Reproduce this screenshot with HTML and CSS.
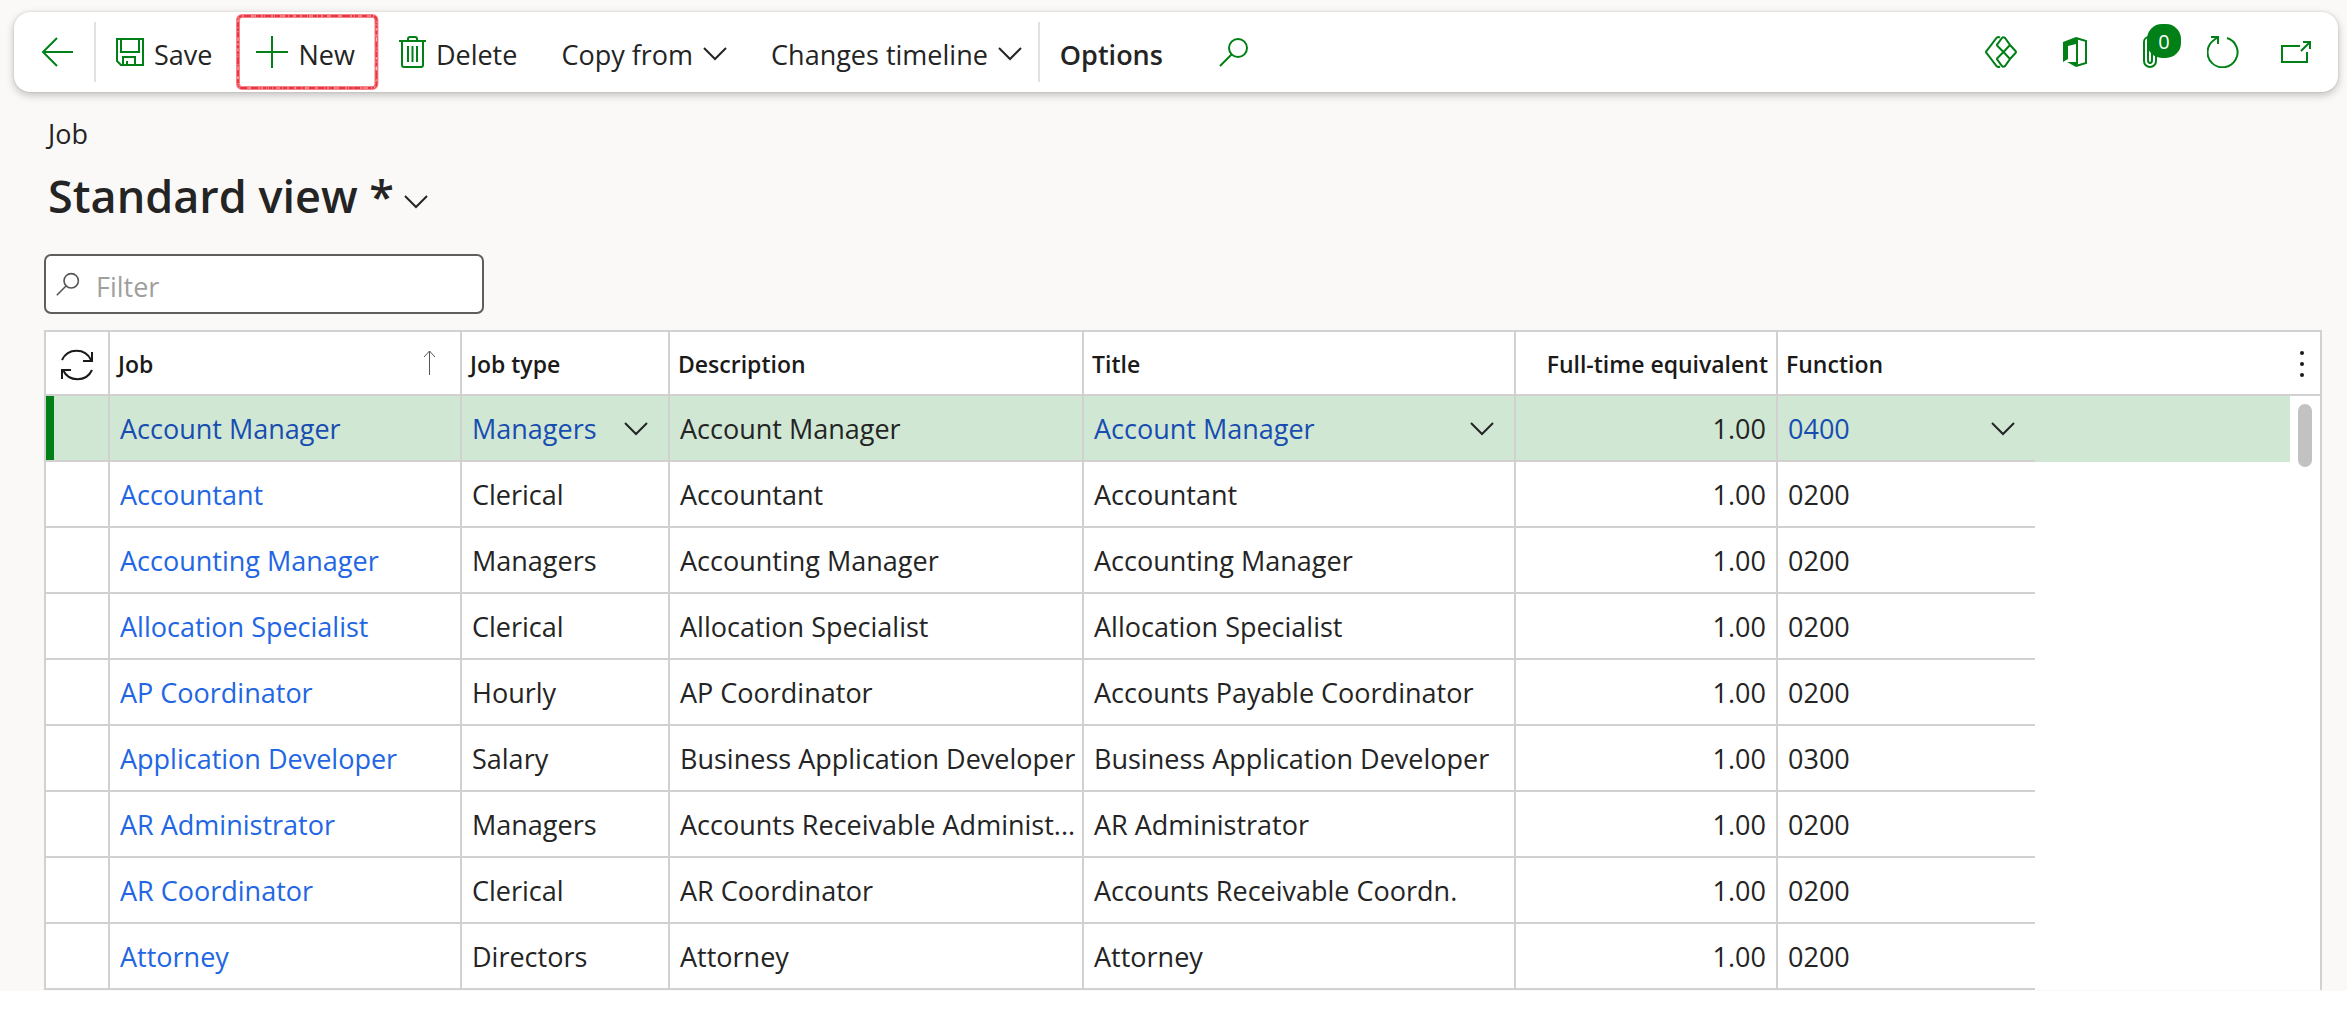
FILE: index.html
```html
<!DOCTYPE html>
<html lang="en">
<head>
<meta charset="utf-8">
<title>Job - Standard view</title>
<link rel="stylesheet" href="styles.css">
</head>
<body>
<svg width="0" height="0" class="defs" aria-hidden="true">
  <symbol id="chevron" viewBox="0 0 24 14"><path d="M1 1l11 11L23 1" fill="none" stroke="currentColor" stroke-width="2"/></symbol>
  <symbol id="search" viewBox="0 0 30 30"><circle cx="19" cy="11" r="9" fill="none" stroke="currentColor" stroke-width="2"/><path d="M12.500 17.500L1 29" fill="none" stroke="currentColor" stroke-width="2"/></symbol>
</svg>
<div class="app">
  <header class="toolbar">
    <button class="tool back" aria-label="Back"><svg width="32" height="30" viewBox="0 0 32 30"><path d="M32 15H2M16 1L2 15l14 14" /></svg></button>
    <span class="divider"></span>
    <button class="tool"><svg width="28" height="28" viewBox="0 0 28 28"><path d="M1 1h26v26H5l-4-4zM5 1v13h18V1M7 27v-8h12v8M11 27v-4"/></svg><span>Save</span></button>
    <button class="tool marked"><svg width="32" height="32" viewBox="0 0 32 32"><path d="M16 0v32M0 16h32"/></svg><span>New</span><svg class="frame" aria-hidden="true"><rect class="crayon"/><rect class="crayon grain"/><rect class="crayon gaps"/></svg></button>
    <button class="tool"><svg width="27" height="32" viewBox="0 0 27 32"><path d="M0 5h27M9 5V3q0-2 2-2h5q2 0 2 2v2M3 5v24q0 2 2 2h17q2 0 2-2V5M9 10v16M13.500 10v16M18 10v16"/></svg><span>Delete</span></button>
    <button class="tool"><span>Copy from</span><svg class="chev" width="24" height="14"><use href="#chevron"/></svg></button>
    <button class="tool last"><span>Changes timeline</span><svg class="chev" width="24" height="14"><use href="#chevron"/></svg></button>
    <span class="divider"></span>
    <button class="tool options">Options</button>
    <button class="tool find" aria-label="Search"><svg width="30" height="30"><use href="#search"/></svg></button>
    <div class="utilities">
      <button class="icon" aria-label="Power Apps"><svg width="32" height="32" viewBox="0 0 32 32"><path d="M15 1.500q-2-1-3.500.5L1.500 15q-1 1 0 2l10 13q1.500 1.500 3.500.5M17 2q1.500-1.500 3 0l5 7-6.500 7L12.500 10q-1-1 0-2zM25 9l5.500 6q1 1 0 2L25 23l-6.500-7zM18.500 16L25 23l-5 7q-1.500 1.500-3 0l-4.500-6q-1-1 0-2z"/></svg></button>
      <button class="icon" aria-label="Office"><svg width="24" height="30" viewBox="0 0 24 30"><path d="M13 1l10 3v22l-10 3M14 1v28"/><path class="solid" d="M0 5L13 0v7L5 9v13l-5 3zM4 25h9v5z"/></svg></button>
      <button class="icon" aria-label="Attachments"><svg width="14" height="32" viewBox="0 0 14 32"><path d="M1 8v17a6 6 0 0 0 12 0V6a4 4 0 0 0-8 0v18a2 3 0 0 0 4 0V8M1 9V6a5 5 0 0 1 5-5"/></svg><span class="badge">0</span></button>
      <button class="icon" aria-label="Refresh"><svg width="32" height="32" viewBox="0 0 32 32"><path d="M20 2A15 15 0 1 1 7 4l4-3M4 1h7v7"/></svg></button>
      <button class="icon" aria-label="Open in new window"><svg width="30" height="22" viewBox="0 0 30 22"><path d="M19 5H1v16h25V11M20 10l9-9M22 1h7v7"/></svg></button>
    </div>
  </header>
  <main class="page">
    <p class="crumb">Job</p>
    <h1><button class="view">Standard view *<svg width="24" height="14"><use href="#chevron"/></svg></button></h1>
    <label class="filter"><svg width="24" height="24" viewBox="0 0 30 30"><use href="#search"/></svg><input type="text" placeholder="Filter" aria-label="Filter"></label>
    <div class="grid">
      <table>
        <colgroup><col class="c-mark"><col class="c-job"><col class="c-type"><col class="c-desc"><col class="c-title"><col class="c-fte"><col class="c-func"><col><col class="c-gutter"></colgroup>
        <thead><tr>
          <th><button class="sync" aria-label="Refresh rows"><svg width="34" height="34" viewBox="0 0 34 34"><path d="M2 12A16 16 0 0 1 31 12M32 4v9h-9M32 22A16 16 0 0 1 3 22M2 31v-9h9"/></svg></button></th>
          <th><div class="head"><span>Job</span><svg width="13" height="25" viewBox="0 0 13 25"><path d="M6.500 25V1M1 7l5.500-6L12 7"/></svg></div></th>
          <th>Job type</th><th>Description</th><th>Title</th><th class="num">Full-time equivalent</th>
          <th class="open">Function</th><th class="open"></th>
          <th class="open more"><button aria-label="More options"><svg width="6" height="28" viewBox="0 0 6 28"><circle cx="3" cy="3" r="2"/><circle cx="3" cy="14" r="2"/><circle cx="3" cy="25" r="2"/></svg></button></th>
        </tr></thead>
        <tbody>
          <tr class="selected"><td></td><td><a href="#">Account Manager</a></td><td><div class="pick"><a href="#">Managers</a><svg width="24" height="14"><use href="#chevron"/></svg></div></td><td>Account Manager</td><td><div class="pick"><a href="#">Account Manager</a><svg width="24" height="14"><use href="#chevron"/></svg></div></td><td class="num">1.00</td><td class="open"><div class="pick"><a href="#">0400</a><svg width="24" height="14"><use href="#chevron"/></svg></div></td><td class="rest"></td><td class="gutter"><div class="thumb"></div></td></tr>
          <tr><td></td><td><a href="#">Accountant</a></td><td>Clerical</td><td>Accountant</td><td>Accountant</td><td class="num">1.00</td><td class="open">0200</td></tr>
          <tr><td></td><td><a href="#">Accounting Manager</a></td><td>Managers</td><td>Accounting Manager</td><td>Accounting Manager</td><td class="num">1.00</td><td class="open">0200</td></tr>
          <tr><td></td><td><a href="#">Allocation Specialist</a></td><td>Clerical</td><td>Allocation Specialist</td><td>Allocation Specialist</td><td class="num">1.00</td><td class="open">0200</td></tr>
          <tr><td></td><td><a href="#">AP Coordinator</a></td><td>Hourly</td><td>AP Coordinator</td><td>Accounts Payable Coordinator</td><td class="num">1.00</td><td class="open">0200</td></tr>
          <tr><td></td><td><a href="#">Application Developer</a></td><td>Salary</td><td>Business Application Developer</td><td>Business Application Developer</td><td class="num">1.00</td><td class="open">0300</td></tr>
          <tr><td></td><td><a href="#">AR Administrator</a></td><td>Managers</td><td>Accounts Receivable Administ...</td><td>AR Administrator</td><td class="num">1.00</td><td class="open">0200</td></tr>
          <tr><td></td><td><a href="#">AR Coordinator</a></td><td>Clerical</td><td>AR Coordinator</td><td>Accounts Receivable Coordn.</td><td class="num">1.00</td><td class="open">0200</td></tr>
          <tr><td></td><td><a href="#">Attorney</a></td><td>Directors</td><td>Attorney</td><td>Attorney</td><td class="num">1.00</td><td class="open">0200</td></tr>
        </tbody>
      </table>
    </div>
  </main>
</div>
</body>
</html>
```
FILE: styles.css
```css
* { box-sizing: border-box; }
body {
  margin: 0;
  background: #fff;
  color: #242424;
  font: 27px/36px "Segoe UI", "Open Sans", "Noto Sans", sans-serif;
}
.defs { position: absolute; }
.app { background: #faf9f7; padding-top: 12px; }
button {
  font: inherit;
  color: inherit;
  background: none;
  border: 0;
  padding: 0;
  margin: 0;
}
svg { flex: none; fill: none; stroke: currentColor; stroke-width: 2; }

.toolbar {
  display: flex;
  align-items: center;
  height: 80px;
  margin: 0 9px 0 14px;
  background: #fff;
  border-radius: 16px;
  box-shadow: 0 3px 8px rgba(0, 0, 0, .24), 0 0 2px rgba(0, 0, 0, .16);
}
.tool {
  position: relative;
  display: flex;
  align-items: center;
  gap: 10px;
  height: 76px;
  padding: 0 24px 0 20px;
  white-space: nowrap;
}
.tool > svg { color: #008016; }
.tool > span { padding-top: 5px; }
.tool > .chev { color: #242424; margin: 4px 0 0; }
.back { padding: 0 21px 0 27px; }
.last { padding-right: 16px; }
.divider { width: 2px; height: 60px; background: #e1e1e1; }
.options { font-weight: 600; padding-top: 5px; }
.find { margin-left: 12px; }
.tool > .frame { position: absolute; inset: 0; width: 100%; height: 100%; }
.crayon {
  x: 2px;
  y: 2px;
  width: calc(100% - 4px);
  height: calc(100% - 4px);
  rx: 4px;
  stroke: #f5858b;
  stroke-width: 4;
}
.grain { stroke: #ec3540; stroke-width: 2; stroke-dasharray: 9 1 3 1 5 2 11 1; }
.gaps { stroke: #fbc4c8; stroke-width: 1; stroke-dasharray: 2 7 4 9 1 6; }

.utilities { display: flex; align-items: center; margin: 0 27px 0 auto; }
.icon { position: relative; display: flex; color: #008016; margin-left: 46px; }
.icon:nth-child(3) { margin-left: 56px; }
.icon:nth-child(4) { margin-left: 50px; }
.icon:nth-child(5) { margin-left: 42px; }
.utilities .solid { fill: currentColor; stroke: none; }
.badge {
  position: absolute;
  left: 4px;
  top: -12px;
  width: 34px;
  height: 34px;
  border-radius: 15px;
  background: #008016;
  color: #fff;
  font-size: 20px;
  line-height: 35px;
}

.page { padding: 24px 25px 1px 44px; }
.crumb { margin: 0; padding-left: 4px; }
h1 { margin: 12px 0 26px; font-size: 45px; line-height: 64px; font-weight: 600; }
.view { display: flex; align-items: center; gap: 10px; padding-left: 4px; }
.view svg { margin-top: 12px; }
.filter {
  display: flex;
  align-items: center;
  gap: 16px;
  width: 440px;
  height: 60px;
  padding: 0 10px;
  background: #fff;
  border: 2px solid #605e5c;
  border-radius: 7px;
}
.filter svg { color: #555; }
.filter input {
  flex: 1;
  min-width: 0;
  padding: 6px 0 0;
  font: inherit;
  border: 0;
  outline: 0;
  background: none;
}
.filter input::placeholder { color: #a19f9d; opacity: 1; }

.grid { margin-top: 16px; background: #fff; border: 2px solid #d1d1d1; border-bottom: 0; }
table { width: 100%; table-layout: fixed; border-collapse: separate; border-spacing: 0; }
.c-mark { width: 64px; }
.c-job { width: 352px; }
.c-type { width: 208px; }
.c-desc { width: 414px; }
.c-title { width: 432px; }
.c-fte { width: 262px; }
.c-func { width: 257px; }
.c-gutter { width: 30px; }
th, td {
  height: 66px;
  padding: 2px 10px 0;
  text-align: left;
  white-space: nowrap;
  border-right: 2px solid #d1d1d1;
  border-bottom: 2px solid #d1d1d1;
}
th { height: 64px; padding: 2px 8px 0; font-size: 23px; font-weight: 600; color: #1b1a19; }
.open { border-right: 0; }
.num { text-align: right; }
th:first-child { padding: 4px 0 0; }
.sync { display: block; width: 34px; height: 34px; margin: 0 auto; }
.head { display: flex; align-items: center; justify-content: space-between; padding-right: 16px; }
.head svg { color: #555; stroke-width: 1; margin-bottom: 4px; }
th.more { padding: 2px 0 0; }
.more button { display: block; margin: 0 auto 0 9px; }
.more svg { display: block; fill: currentColor; stroke: none; }
a { color: #2266e3; text-decoration: none; }
.selected td { background: #d0e7d4; }
.selected a { color: #174db0; }
.selected td:first-child { box-shadow: inset 8px 0 #008016; }
.selected td.rest { border-color: #d0e7d4; border-right: 0; }
.selected td.gutter { position: relative; background: none; border: 0; }
.pick { display: flex; align-items: center; justify-content: space-between; padding-right: 10px; }
.thumb { position: absolute; left: 8px; top: 8px; width: 14px; height: 63px; border-radius: 7px; background: #c2c2c2; }
```
